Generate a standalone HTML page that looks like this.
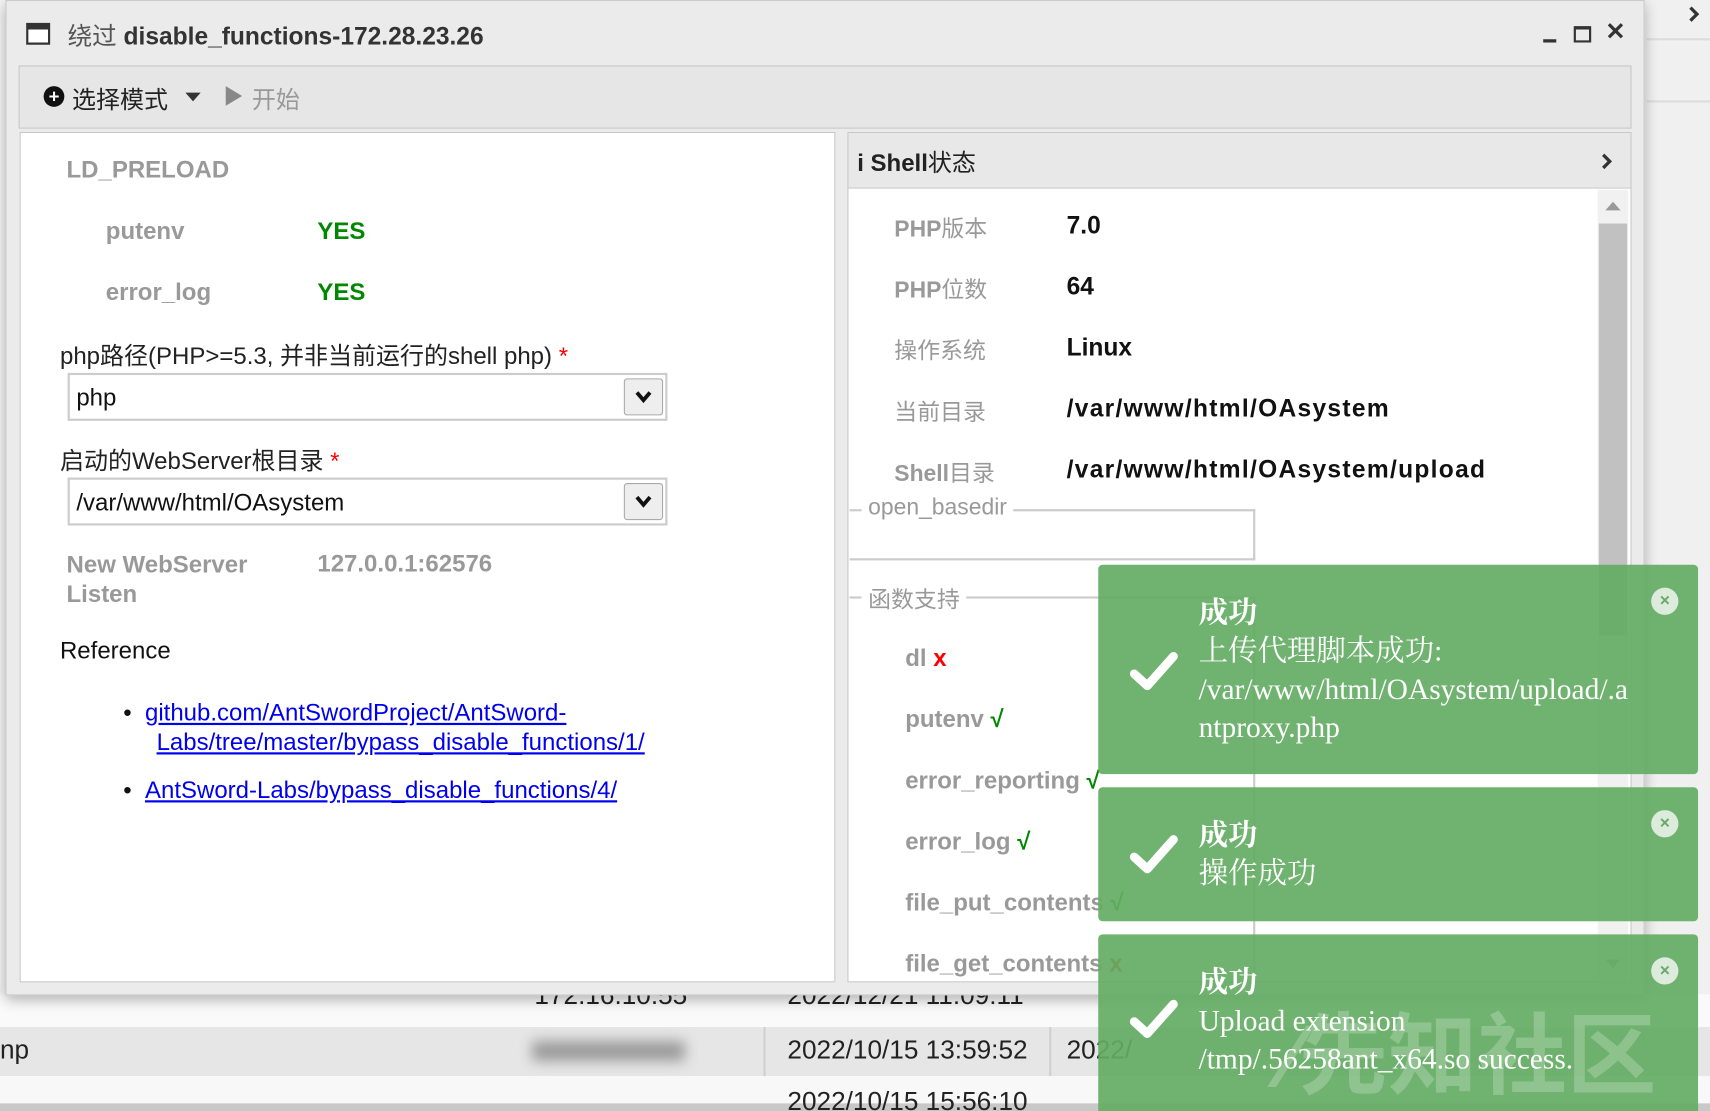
<!DOCTYPE html>
<html><head><meta charset="utf-8"><style>
*{margin:0;padding:0;box-sizing:border-box}
html,body{width:1710px;height:1111px;overflow:hidden;background:#f4f4f4}
#w{position:absolute;left:0;top:0;width:1568px;height:1019px;transform:scale(1.0906,1.0903);transform-origin:0 0;font-family:"Liberation Sans","Noto Sans CJK SC",sans-serif;overflow:hidden;background:#f4f4f4}
.a{position:absolute;white-space:nowrap}
.lbl{color:#999;font-weight:bold;font-size:21px}
.val{color:#111;font-weight:bold;font-size:22.5px}
.toast{position:absolute;left:1007px;width:550px;background:rgba(100,172,100,0.92);border-radius:4px;color:#fff;font-family:"Liberation Serif","Noto Serif CJK SC",serif;font-size:27px;line-height:35px}
.toast .t{position:absolute;left:92px}
.cl{position:absolute;left:507px;width:25px;height:25px;border-radius:50%;background:#dcebdc;color:#6aa86a;font:bold 16px/25px "Liberation Sans",sans-serif;text-align:center}
.ck{position:absolute;left:28px}
a{color:#00e;text-decoration:underline}
.dd{position:absolute;width:36px;height:34px;border:1px solid #aaa;border-radius:3px;background:#eee}
</style></head><body><div id="w">
<div class="a" style="left:1508px;top:0;width:60px;height:1019px;background:#f0f0f0"></div>
<div class="a" style="left:1510px;top:35px;width:58px;height:2px;background:#ddd"></div>
<div class="a" style="left:1510px;top:92px;width:58px;height:2px;background:#ddd"></div>
<svg class="a" style="left:1546px;top:5px" width="14" height="16" viewBox="0 0 14 16"><path d="M4 2 L10 8 L4 14" stroke="#333" stroke-width="3" fill="none"/></svg>
<div class="a" style="left:0;top:912px;width:1568px;height:30px;background:#fafafa"></div>
<div class="a" style="left:0;top:942px;width:1568px;height:45px;background:#e6e6e6"></div>
<div class="a" style="left:0;top:987px;width:1568px;height:26px;background:#f8f8f8"></div>
<div class="a" style="left:0;top:1012px;width:1568px;height:7px;background:#c8c8c8"></div>
<div class="a" style="left:700px;top:942px;width:2px;height:45px;background:#d0d0d0"></div>
<div class="a" style="left:962px;top:942px;width:2px;height:45px;background:#d0d0d0"></div>
<div class="a" style="left:490px;top:900px;font-size:24px;color:#222">172.16.10.55</div>
<div class="a" style="left:722px;top:900px;font-size:24px;color:#222">2022/12/21 11:09:11</div>
<div class="a" style="left:0;top:950px;font-size:24px;color:#222">np</div>
<div class="a" style="left:488px;top:955px;width:140px;height:18px;background:#999;filter:blur(6px)"></div>
<div class="a" style="left:722px;top:950px;font-size:24px;color:#222">2022/10/15 13:59:52</div>
<div class="a" style="left:978px;top:950px;font-size:24px;color:#222">2022/</div>
<div class="a" style="left:722px;top:997px;font-size:24px;color:#222">2022/10/15 15:56:10</div>
<div class="a" style="left:5px;top:0;width:1503px;height:913px;background:#ebebeb;border:1px solid #ccc;box-shadow:0 4px 12px rgba(0,0,0,.3)"></div>
<div class="a" style="left:24px;top:21px;width:22px;height:20px;border:2px solid #333;border-top-width:6px;background:#fff"></div>
<div class="a" style="left:62px;top:16px;font-size:22.5px;color:#333"><span style="color:#555">绕过</span> <b>disable_functions-172.28.23.26</b></div>
<div class="a" style="left:1415px;top:36px;width:12px;height:3px;background:#333"></div>
<div class="a" style="left:1443px;top:24px;width:16px;height:15px;border:2px solid #333;border-top-width:3px"></div>
<div class="a" style="left:1472px;top:16px;font-size:22px;font-weight:bold;color:#333">✕</div>
<div class="a" style="left:17px;top:60px;width:1479px;height:58px;background:#e6e6e6;border:1px solid #c8c8c8"></div>
<div class="a" style="left:40px;top:79px;width:19px;height:19px;border-radius:50%;background:#111;color:#fff;font:bold 17px/19px sans-serif;text-align:center">+</div>
<div class="a" style="left:66px;top:74px;font-size:22px;color:#222">选择模式</div>
<div class="a" style="left:170px;top:85px;width:0;height:0;border-left:7px solid transparent;border-right:7px solid transparent;border-top:8px solid #333"></div>
<div class="a" style="left:207px;top:79px;width:0;height:0;border-top:9px solid transparent;border-bottom:9px solid transparent;border-left:15px solid #888"></div>
<div class="a" style="left:231px;top:74px;font-size:22px;color:#999">开始</div>
<div class="a" style="left:18px;top:121px;width:748px;height:780px;background:#fff;border:1px solid #c8c8c8"></div>
<div class="a lbl" style="left:61px;top:143px;font-size:22px">LD_PRELOAD</div>
<div class="a lbl" style="left:97px;top:199px;font-size:22px">putenv</div>
<div class="a" style="left:291px;top:199px;font-size:22px;font-weight:bold;color:#080">YES</div>
<div class="a lbl" style="left:97px;top:255px;font-size:22px">error_log</div>
<div class="a" style="left:291px;top:255px;font-size:22px;font-weight:bold;color:#080">YES</div>
<div class="a" style="left:55px;top:309px;font-size:22px;color:#222">php路径(PHP&gt;=5.3, 并非当前运行的shell php) <span style="color:red">*</span></div>
<div class="a" style="left:62px;top:342px;width:550px;height:44px;border:2px solid #ccc"></div>
<div class="a" style="left:70px;top:352px;font-size:22px;color:#111">php</div>
<div class="dd" style="left:572px;top:347px"><svg width="34" height="32" viewBox="0 0 34 32"><path d="M11 12 L17 19 L23 12" stroke="#111" stroke-width="3.5" fill="none"/></svg></div>
<div class="a" style="left:55px;top:405px;font-size:22px;color:#222">启动的WebServer根目录 <span style="color:red">*</span></div>
<div class="a" style="left:62px;top:438px;width:550px;height:44px;border:2px solid #ccc"></div>
<div class="a" style="left:70px;top:448px;font-size:22px;color:#111">/var/www/html/OAsystem</div>
<div class="dd" style="left:572px;top:443px"><svg width="34" height="32" viewBox="0 0 34 32"><path d="M11 12 L17 19 L23 12" stroke="#111" stroke-width="3.5" fill="none"/></svg></div>
<div class="a lbl" style="left:61px;top:504px;line-height:27px;font-size:22px">New WebServer<br>Listen</div>
<div class="a lbl" style="left:291px;top:504px;font-size:22px">127.0.0.1:62576</div>
<div class="a" style="left:55px;top:584px;font-size:22px;color:#111">Reference</div>
<div class="a" style="left:113px;top:640px;font-size:22px;line-height:27px;color:#111">•&nbsp;&nbsp;<a>github.com/AntSwordProject/AntSword-</a><br>&nbsp;&nbsp;&nbsp;&nbsp;&nbsp;<a>Labs/tree/master/bypass_disable_functions/1/</a></div>
<div class="a" style="left:113px;top:712px;font-size:22px;color:#111">•&nbsp;&nbsp;<a>AntSword-Labs/bypass_disable_functions/4/</a></div>
<div class="a" style="left:777px;top:121px;width:719px;height:780px;background:#fff;border:1px solid #c8c8c8"></div>
<div class="a" style="left:778px;top:122px;width:717px;height:51px;background:#e8e8e8;border-bottom:1px solid #ccc"></div>
<div class="a" style="left:786px;top:132px;font-size:22px;font-weight:bold;color:#222">i Shell<span style="font-weight:normal">状态</span></div>
<svg class="a" style="left:1466px;top:139px" width="14" height="18" viewBox="0 0 14 18"><path d="M4 3 L10 9 L4 15" stroke="#333" stroke-width="3" fill="none"/></svg>
<div class="a" style="left:1465px;top:174px;width:28px;height:726px;background:#f1f1f1"></div>
<div class="a" style="left:1466px;top:205px;width:26px;height:378px;background:#c1c1c1"></div>
<div class="a" style="left:1472px;top:185px;border-left:7px solid transparent;border-right:7px solid transparent;border-bottom:8px solid #999"></div>
<div class="a" style="left:1472px;top:880px;border-left:7px solid transparent;border-right:7px solid transparent;border-top:8px solid #999"></div>
<div class="a lbl" style="left:820px;top:194px">PHP<span style="font-weight:normal">版本</span></div><div class="a val" style="left:978px;top:194px">7.0</div>
<div class="a lbl" style="left:820px;top:250px">PHP<span style="font-weight:normal">位数</span></div><div class="a val" style="left:978px;top:250px">64</div>
<div class="a lbl" style="left:820px;top:306px;font-weight:normal">操作系统</div><div class="a val" style="left:978px;top:306px">Linux</div>
<div class="a lbl" style="left:820px;top:362px;font-weight:normal">当前目录</div><div class="a val" style="left:978px;top:362px;letter-spacing:1.2px">/var/www/html/OAsystem</div>
<div class="a lbl" style="left:820px;top:418px">Shell<span style="font-weight:normal">目录</span></div><div class="a val" style="left:978px;top:418px;letter-spacing:1.2px">/var/www/html/OAsystem/upload</div>
<div class="a" style="left:779px;top:467px;width:372px;height:47px;border:2px solid #ccc;border-left:none"></div>
<div class="a" style="left:790px;top:454px;font-size:21px;color:#999;background:#fff;padding:0 6px">open_basedir</div>
<div class="a" style="left:779px;top:547px;width:372px;height:360px;border-top:2px solid #ccc;border-right:2px solid #ccc"></div>
<div class="a" style="left:790px;top:534px;font-size:21px;color:#999;background:#fff;padding:0 6px">函数支持</div>
<div class="a lbl" style="left:830px;top:591px;font-size:22px">dl <span style="color:red">x</span></div>
<div class="a lbl" style="left:830px;top:647px;font-size:22px">putenv <span style="color:#080">√</span></div>
<div class="a lbl" style="left:830px;top:703px;font-size:22px">error_reporting <span style="color:#080">√</span></div>
<div class="a lbl" style="left:830px;top:759px;font-size:22px">error_log <span style="color:#080">√</span></div>
<div class="a lbl" style="left:830px;top:815px;font-size:22px">file_put_contents <span style="color:#080">√</span></div>
<div class="a lbl" style="left:830px;top:871px;font-size:22px">file_get_contents <span style="color:red">x</span></div>
<div class="toast" style="top:518px;height:192px"><div class="cl" style="top:21px">×</div><svg class="ck" style="top:78px" width="46" height="40" viewBox="0 0 46 40"><path d="M5 22 L17 33 L41 6" stroke="#fff" stroke-width="8" fill="none" stroke-linecap="round" stroke-linejoin="round"/></svg><div class="t" style="top:27px;font-weight:bold">成功</div><div class="t" style="top:62px">上传代理脚本成功:<br>/var/www/html/OAsystem/upload/.a<br>ntproxy.php</div></div>
<div class="toast" style="top:722px;height:123px"><div class="cl" style="top:21px">×</div><svg class="ck" style="top:42px" width="46" height="40" viewBox="0 0 46 40"><path d="M5 22 L17 33 L41 6" stroke="#fff" stroke-width="8" fill="none" stroke-linecap="round" stroke-linejoin="round"/></svg><div class="t" style="top:27px;font-weight:bold">成功</div><div class="t" style="top:62px">操作成功</div></div>
<div class="toast" style="top:857px;height:170px"><div class="a" style="left:170px;top:60px;font-size:82px;line-height:90px;color:rgba(255,255,255,.22);font-family:'Noto Sans CJK SC',sans-serif;font-weight:bold">⁄先知社区</div><div class="cl" style="top:21px">×</div><svg class="ck" style="top:58px" width="46" height="40" viewBox="0 0 46 40"><path d="M5 22 L17 33 L41 6" stroke="#fff" stroke-width="8" fill="none" stroke-linecap="round" stroke-linejoin="round"/></svg><div class="t" style="top:27px;font-weight:bold">成功</div><div class="t" style="top:62px">Upload extension<br>/tmp/.56258ant_x64.so success.</div></div>
</div></body></html>
